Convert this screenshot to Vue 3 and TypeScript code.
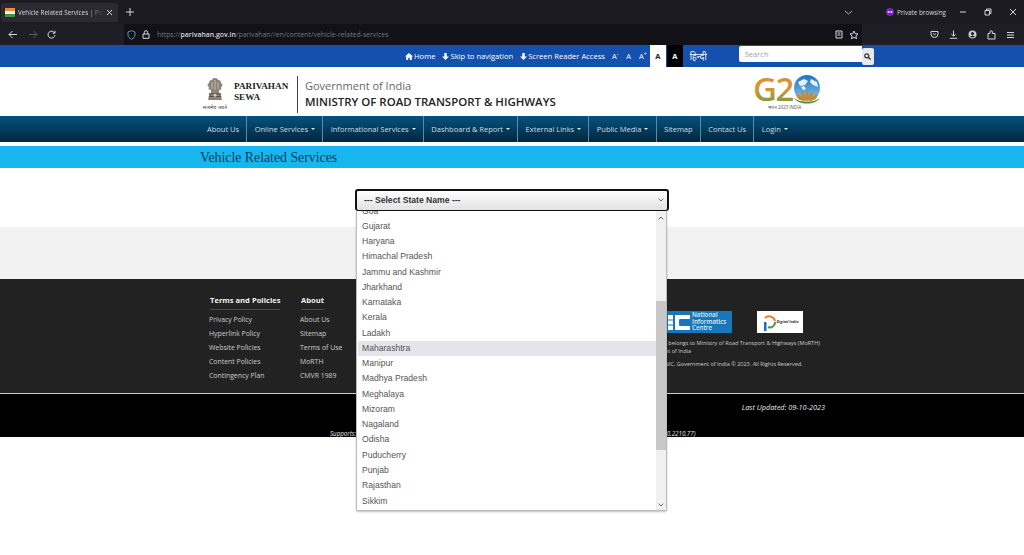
<script setup lang="ts">
// Parivahan "Vehicle Related Services" page inside a private Firefox window.
const topLinks = [
  ["home", "Home"],
  ["down", "Skip to navigation"],
  ["down", "Screen Reader Access"],
];
const navItems = [
  { label: "About Us", caret: false },
  { label: "Online Services", caret: true },
  { label: "Informational Services", caret: true },
  { label: "Dashboard & Report", caret: true },
  { label: "External Links", caret: true },
  { label: "Public Media", caret: true },
  { label: "Sitemap", caret: false },
  { label: "Contact Us", caret: false },
  { label: "Login", caret: true },
];
const policies = ["Privacy Policy", "Hyperlink Policy", "Website Policies", "Content Policies", "Contingency Plan"];
const about = ["About Us", "Sitemap", "Terms of Use", "MoRTH", "CMVR 1989"];
const states = [
  "Goa", "Gujarat", "Haryana", "Himachal Pradesh", "Jammu and Kashmir", "Jharkhand", "Karnataka",
  "Kerala", "Ladakh", "Maharashtra", "Manipur", "Madhya Pradesh", "Meghalaya", "Mizoram",
  "Nagaland", "Odisha", "Puducherry", "Punjab", "Rajasthan", "Sikkim",
];
</script>

<template>
  <div class="page">
    <div class="tabs">
      <div class="tab">
        <svg class="flag" width="10" height="9" viewBox="0 0 10 9">
          <rect width="10" height="3" fill="#f08a2c" />
          <rect y="3" width="10" height="3" fill="#f4f0e6" />
          <rect y="6" width="10" height="3" fill="#3f9440" />
        </svg>
        <span class="tab-title">Vehicle Related Services | Parivahan Sewa</span>
        <svg width="7" height="7" viewBox="0 0 7 7" class="ico"><path d="M1 1l5 5M6 1L1 6" /></svg>
      </div>
      <svg class="plus ico" width="8" height="8" viewBox="0 0 8 8"><path d="M4 0v8M0 4h8" /></svg>
      <svg class="tabs-chevron ico" width="9" height="5" viewBox="0 0 9 5"><path d="M1 1l3.500 3L8 1" /></svg>
      <div class="private">
        <svg width="8" height="8" viewBox="0 0 8 8">
          <circle cx="4" cy="4" r="4" fill="#7b1fc4" />
          <circle cx="2.600" cy="4" r="1.100" fill="#e8d8f5" />
          <circle cx="5.400" cy="4" r="1.100" fill="#e8d8f5" />
        </svg>
        <span>Private browsing</span>
      </div>
      <div class="win-btns">
        <svg class="ico" width="8" height="8" viewBox="0 0 8 8"><path d="M1 4h6" /></svg>
        <svg class="ico" width="8" height="8" viewBox="0 0 8 8"><path d="M1 2.500h4.500V7H1zM2.500 2.500V1H7v4.500H5.500" /></svg>
        <svg class="ico" width="8" height="8" viewBox="0 0 8 8"><path d="M1 1l6 6M7 1L1 7" /></svg>
      </div>
    </div>

    <div class="toolbar">
      <div class="nav-btns">
        <svg class="ico" width="10" height="9" viewBox="0 0 10 9"><path d="M9 4.500H1M4.500 1L1 4.500 4.500 8" /></svg>
        <svg class="ico dim" width="10" height="9" viewBox="0 0 10 9"><path d="M1 4.500h8M5.500 1L9 4.500 5.500 8" /></svg>
        <svg class="ico" width="9" height="9" viewBox="0 0 9 9"><path d="M7.600 3A3.500 3.500 0 1 0 8 5M8 .8V3.200H5.600" /></svg>
      </div>
      <div class="urlbar">
        <svg class="ico shield" width="9" height="10" viewBox="0 0 9 10"><path d="M4.500 .7L8 2v3c0 2-1.500 3.400-3.500 4.300C2.500 8.400 1 7 1 5V2z" /></svg>
        <svg class="ico" width="8" height="9" viewBox="0 0 8 9"><path d="M1 4h6v4.300H1zM2.300 4V2.400a1.700 1.700 0 0 1 3.400 0V4" /></svg>
        <span class="url">https://<b>parivahan.gov.in</b>/parivahan//en/content/vehicle-related-services</span>
        <svg class="ico reader" width="8" height="9" viewBox="0 0 8 9"><path d="M1 1h6v7H1zM2.500 3h3M2.500 5h3" /></svg>
        <svg class="ico" width="10" height="10" viewBox="0 0 10 10"><path d="M5 1l1.200 2.700 2.800.3-2.100 1.900.6 2.800L5 7.300 2.500 8.700l.6-2.800L1 4l2.800-.3z" /></svg>
      </div>
      <div class="tool-btns">
        <svg class="ico" width="9" height="9" viewBox="0 0 9 9"><path d="M1 1.500h7V4a3.500 3.500 0 0 1-7 0zM3 3.500l1.500 1.300L6 3.500" /></svg>
        <svg class="ico" width="9" height="9" viewBox="0 0 9 9"><path d="M4.500 .5v5.500M2.300 4l2.200 2.200L6.700 4M.8 8.300h7.400" /></svg>
        <svg width="9" height="9" viewBox="0 0 9 9"><circle cx="4.500" cy="4.500" r="4" fill="#c9c9cf" /><circle cx="4.500" cy="3.500" r="1.500" fill="#1c1b22" /><path d="M2 7.300a2.700 2.700 0 0 1 5 0z" fill="#1c1b22" /></svg>
        <svg class="ico" width="9" height="10" viewBox="0 0 9 10"><path d="M1 3.500h2V2a1.200 1.200 0 0 1 2.400 0v1.500H8V9H1z" /></svg>
        <svg class="ico" width="9" height="8" viewBox="0 0 9 8"><path d="M1 1.500h7M1 4h7M1 6.500h7" /></svg>
      </div>
    </div>

    <div class="topbar">
      <div class="wrap topbar-inner">
        <a v-for="[icon, text] in topLinks" :key="text" class="top-link">
          <svg v-if="icon === 'home'" width="8" height="7" viewBox="0 0 8 7"><path d="M4 0L0 3.500h1.200V7h2V4.800h1.600V7h2V3.500H8z" fill="#fff" /></svg>
          <svg v-else width="7" height="7" viewBox="0 0 7 7"><path d="M2.300 0h2.400v3.500H7L3.500 7 0 3.500h2.300z" fill="#fff" /></svg>
          {{ text }}
        </a>
        <span class="size first">A<sup>-</sup></span>
        <span class="size">A</span>
        <span class="size">A<sup>+</sup></span>
        <span class="contrast light">A</span>
        <span class="contrast dark">A</span>
        <span class="hindi">हिन्दी</span>
        <div class="search">
          <span class="search-box">Search</span>
          <span class="search-btn">
            <svg width="7" height="7" viewBox="0 0 7 7"><circle cx="2.800" cy="2.800" r="2" fill="none" stroke="#333" stroke-width="1.200" /><path d="M4.300 4.300L6.500 6.500" stroke="#333" stroke-width="1.400" /></svg>
          </span>
        </div>
      </div>
    </div>

    <header class="wrap masthead">
      <div class="emblem">
        <svg width="18" height="26" viewBox="0 0 18 26">
          <path d="M9 0c2 0 3 1 3 2 2 0 3 1 3 3 2 1 2 3 0 4 1 1 0 3-2 3v3h2v2l1 5H2l1-5v-2h2v-3c-2 0-3-2-2-3-2-1-2-3 0-4 0-2 1-3 3-3 0-1 1-2 3-2z" fill="#8a8378" />
          <path d="M6 4v7M9 2v10M12 4v7" stroke="#d8d4cc" stroke-width=".7" />
          <path d="M3 16h12M3 18.500h12" stroke="#4e4a44" stroke-width=".9" />
          <circle cx="9" cy="17.200" r="1.500" fill="#d8d4cc" />
        </svg>
        <span class="motto">सत्यमेव जयते</span>
      </div>
      <div class="brand">PARIVAHAN<br />SEWA</div>
      <div class="ministry">
        <div class="gov">Government of India</div>
        <div class="morth">MINISTRY OF ROAD TRANSPORT &amp; HIGHWAYS</div>
      </div>
      <svg class="g20" width="72" height="40" viewBox="0 0 72 40">
        <defs>
          <linearGradient id="g-fill" x1="0" y1="0" x2="0" y2="1">
            <stop offset="0" stop-color="#e98a2d" />
            <stop offset=".55" stop-color="#c99a3a" />
            <stop offset="1" stop-color="#4d9a3f" />
          </linearGradient>
          <linearGradient id="globe" x1="0" y1="0" x2="0" y2="1">
            <stop offset="0" stop-color="#1a76bf" />
            <stop offset="1" stop-color="#8cc4e6" />
          </linearGradient>
        </defs>
        <text x="0" y="26" class="g20-text" fill="url(#g-fill)">G2</text>
        <circle cx="54" cy="13" r="13" fill="url(#globe)" />
        <path d="M45 7l6-3 4 2-3 4-5 1zM58 4l6 3 1 5-5-2-3-3zM48 12l3-1 2 3-3 1z" fill="#e7f2f8" />
        <path d="M54 15c2 3 2 7 0 11-2-4-2-8 0-11zM48 16c3 2 5 5 5.500 10-3.500-2-5.500-5-5.500-10zM60 16c-3 2-5 5-5.500 10 3.500-2 5.500-5 5.500-10zM43 19c4 1 7 3 9 7-5 0-8-2-9-7zM65 19c-4 1-7 3-9 7 5 0 8-2 9-7z" fill="#c98a2e" />
        <path d="M41 23c4 3 8 3.500 13 3.500s9-.5 13-3.500c-3 4-7 5.500-13 5.500s-10-1.500-13-5.500z" fill="#4d8f3a" />
        <text x="15" y="34" class="g20-small" fill="#555">भारत 2023 INDIA</text>
      </svg>
    </header>

    <nav class="navbar">
      <div class="wrap nav-inner">
        <a v-for="item in navItems" :key="item.label" class="nav-item">
          {{ item.label }}<i v-if="item.caret" class="caret"></i>
        </a>
      </div>
    </nav>

    <div class="title-band">
      <h1 class="wrap page-title">Vehicle Related Services</h1>
    </div>

    <div class="select-area">
      <div class="select-wrap">
        <div class="select">
          <span>--- Select State Name ---</span>
          <svg class="select-arrow" width="6" height="4" viewBox="0 0 6 4"><path d="M.7.7L3 3 5.300.7" fill="none" stroke="#666" /></svg>
        </div>
        <div class="dropdown">
          <ul class="options">
            <li v-for="s in states" :key="s" :class="{ hover: s === 'Maharashtra' }">{{ s }}</li>
          </ul>
          <div class="scrollbar">
            <svg class="sb-up" width="6" height="4" viewBox="0 0 6 4"><path d="M.7 3.300L3 1l2.300 2.300" fill="none" stroke="#666" /></svg>
            <div class="sb-thumb"></div>
            <svg class="sb-down" width="6" height="4" viewBox="0 0 6 4"><path d="M.7.7L3 3 5.300.7" fill="none" stroke="#666" /></svg>
          </div>
        </div>
      </div>
    </div>

    <div class="grey-band"></div>

    <footer class="footer">
      <div class="wrap foot-inner">
        <div class="foot-col policies">
          <h4>Terms and Policies</h4>
          <a v-for="p in policies" :key="p">{{ p }}</a>
        </div>
        <div class="foot-col">
          <h4>About</h4>
          <a v-for="a in about" :key="a">{{ a }}</a>
        </div>
        <div class="foot-right">
          <div class="logos">
            <div class="nic">
              <svg width="22" height="15" viewBox="0 0 22 15"><path d="M0 0h5v15H0zM7 0h15v4H12c-1 0-1 1-1 3.500S11 11 12 11h10v4H7z" fill="#fff" /><path d="M0 5h5M0 10h5" stroke="#1877bb" /></svg>
              <span>National<br />Informatics<br />Centre</span>
            </div>
            <div class="digital">
              <svg width="14" height="17" viewBox="0 0 14 17">
                <path d="M3 4a6 6 0 0 1 10 3" fill="none" stroke="#e8792b" stroke-width="2" />
                <path d="M13 8a5 5 0 0 1-7 5" fill="none" stroke="#4d9a3f" stroke-width="2" />
                <path d="M2 8h2.500v9H2z" fill="#1d6fb8" />
              </svg>
              <span class="di-text">Digital India</span>
            </div>
          </div>
          <p class="rights-a">This site belongs to Ministry of Road Transport &amp; Highways (MoRTH)</p>
          <p class="rights-b">Government of India</p>
          <p class="rights-c">By NIC, Government of India © 2023. All Rights Reserved.</p>
        </div>
      </div>
    </footer>

    <div class="blackbar">
      <div class="updated">Last Updated: 09-10-2023</div>
      <div class="supports">Supports: Mozilla Firefox 106.0, Google Chrome 106.0, Microsoft Edge 106.0, Apple Safari 16.1, Brave 1.45, Opera 92.0 (106.0.2210.77)</div>
    </div>
  </div>
</template>

<style>
html,
body {
  margin: 0;
  background: #fff;
}
</style>

<style scoped>
.page {
  position: relative;
  width: 1024px;
  height: 555px;
  overflow: hidden;
  font-family: "Open Sans", "Noto Sans", sans-serif;
  background: #fff;
}
.wrap {
  width: 630px;
  margin: 0 auto;
  box-sizing: border-box;
}
.ico {
  fill: none;
  stroke: #d6d6da;
  stroke-width: 1;
  flex: none;
}
.ico.dim {
  stroke: #5c5b63;
}

/* browser chrome */
.tabs {
  height: 24px;
  display: flex;
  align-items: center;
  background: #1c1b22;
  color: #d6d6da;
  font-size: 6.300px;
}
.tab {
  width: 117px;
  height: 19px;
  margin-left: 1px;
  padding: 0 5px 0 4px;
  box-sizing: border-box;
  display: flex;
  align-items: center;
  gap: 3px;
  background: #2b2a33;
  border-radius: 3px;
}
.flag {
  flex: none;
}
.tab-title {
  flex: 1;
  overflow: hidden;
  white-space: nowrap;
  -webkit-mask-image: linear-gradient(to right, #000 82%, transparent);
  mask-image: linear-gradient(to right, #000 82%, transparent);
}
.plus {
  margin-left: 8px;
}
.tabs-chevron {
  margin-left: 710px;
  stroke: #aaa;
}
.private {
  flex: none;
  display: flex;
  align-items: center;
  gap: 3px;
  margin-left: 33px;
  white-space: nowrap;
}
.win-btns {
  flex: none;
  display: flex;
  gap: 17px;
  margin-left: 13px;
}
.toolbar {
  height: 21px;
  display: flex;
  align-items: center;
  background: #1f1e26;
}
.nav-btns {
  width: 124px;
  display: flex;
  align-items: center;
  gap: 9.500px;
  padding-left: 8px;
  box-sizing: border-box;
}
.urlbar {
  width: 738px;
  height: 21px;
  display: flex;
  align-items: center;
  gap: 6px;
  padding: 0 3px;
  box-sizing: border-box;
  background: #121117;
}
.shield {
  stroke: #4d9bb8;
}
.url {
  flex: 1;
  margin-left: 1px;
  font-size: 6.900px;
  color: #77767e;
  white-space: nowrap;
}
.url b {
  color: #d8d8dc;
  font-weight: 600;
}
.tool-btns {
  display: flex;
  align-items: center;
  gap: 10px;
  margin-left: 68px;
}

/* top strip */
.topbar {
  height: 22px;
  background: #1450ae;
}
.topbar-inner {
  height: 22px;
  padding-left: 208px;
  display: flex;
  align-items: center;
  color: #fff;
  font-size: 7.600px;
}
.top-link {
  flex: none;
  display: flex;
  align-items: center;
  gap: 1px;
  margin-right: 7px;
  white-space: nowrap;
}
.size {
  flex: none;
  margin-left: 7px;
  margin-right: 1px;
  font-size: 7.500px;
}
.size.first {
  margin-left: 0;
}
.size sup {
  font-size: 5px;
  line-height: 0;
}
.contrast {
  flex: none;
  width: 16px;
  height: 22px;
  display: flex;
  align-items: center;
  justify-content: center;
  font-weight: 700;
  font-size: 7.500px;
}
.contrast.light {
  margin-left: 2px;
  background: #fff;
  color: #222;
}
.contrast.dark {
  margin-left: 1px;
  background: #000;
}
.hindi {
  flex: none;
  margin-left: 7px;
  font-size: 9px;
}
.search {
  flex: none;
  align-self: flex-start;
  display: flex;
  margin-left: 32px;
}
.search-box {
  width: 123px;
  height: 16px;
  margin-top: 1px;
  padding-left: 6px;
  box-sizing: border-box;
  background: #fff;
  border-radius: 2px 0 0 2px;
  color: #a0a0a0;
  font-size: 7.500px;
  line-height: 16px;
}
.search-btn {
  width: 12px;
  height: 17px;
  margin-top: 3px;
  display: flex;
  align-items: center;
  justify-content: center;
  background: #e8e8e8;
  border-radius: 2px;
}

/* masthead */
.masthead {
  height: 49px;
  display: flex;
  align-items: center;
  padding-left: 5px;
}
.emblem {
  width: 26px;
  flex: none;
  display: flex;
  flex-direction: column;
  align-items: center;
  margin-top: 5px;
}
.motto {
  font-size: 5px;
  color: #444;
  line-height: 6px;
  white-space: nowrap;
}
.brand {
  margin-left: 6px;
  width: 63px;
  flex: none;
  font-family: "Liberation Serif", serif;
  font-weight: 700;
  font-size: 9.200px;
  line-height: 11px;
  color: #222;
}
.ministry {
  height: 37px;
  margin-top: 6px;
  padding-left: 7px;
  border-left: 1px solid #444;
  display: flex;
  flex-direction: column;
  justify-content: center;
  padding-bottom: 2px;
  box-sizing: border-box;
}
.gov {
  font-size: 11px;
  line-height: 16px;
  color: #666;
}
.morth {
  font-size: 11.450px;
  line-height: 16px;
  font-weight: 600;
  color: #222;
  white-space: nowrap;
}
.g20 {
  margin-left: auto;
  margin-right: 2px;
  margin-top: 7px;
  flex: none;
}
.g20-text {
  font-family: "Open Sans", sans-serif;
  font-size: 33px;
  font-weight: 600;
  letter-spacing: -1.500px;
}
.g20-small {
  font-size: 4.500px;
}

/* nav */
.navbar {
  height: 26px;
  background: linear-gradient(#05527f, #02263f);
}
.nav-inner {
  height: 26px;
  display: flex;
  padding-left: 2.700px;
}
.nav-item {
  display: flex;
  align-items: center;
  padding: 0 7.300px;
  color: #cfdbe3;
  font-size: 7.500px;
  white-space: nowrap;
  border-right: 1px solid #5d8aa3;
}
.nav-item:last-child {
  border-right: 0;
}
.caret {
  width: 0;
  height: 0;
  margin-left: 3px;
  border-left: 2px solid transparent;
  border-right: 2px solid transparent;
  border-top: 2px solid #e6eef2;
}
.title-band {
  height: 22px;
  margin-top: 4px;
  background: #17b6ee;
}
.page-title {
  margin-top: 0;
  margin-bottom: 0;
  padding-left: 3px;
  font-family: "Liberation Serif", serif;
  font-weight: 400;
  font-size: 13.800px;
  line-height: 23px;
  color: #0f3f5c;
}

/* state select */
.select-area {
  height: 59px;
  padding-top: 21px;
  box-sizing: border-box;
}
.select-wrap {
  position: relative;
  width: 314px;
  margin: 0 auto;
}
.select {
  height: 22px;
  padding: 0 7px 1px;
  box-sizing: border-box;
  display: flex;
  align-items: center;
  justify-content: space-between;
  border: 2px solid #111;
  border-bottom-width: 1px;
  border-radius: 3px;
  background: linear-gradient(#fff, #e2e2e2);
  font-family: "Liberation Sans", Arial, sans-serif;
  font-weight: 700;
  font-size: 8.600px;
  color: #333;
}
.select-arrow {
  margin-right: -4px;
}
.dropdown {
  position: absolute;
  z-index: 3;
  top: 22px;
  left: 1px;
  width: 311px;
  height: 300px;
  box-sizing: border-box;
  display: flex;
  overflow: hidden;
  background: #fff;
  border: 1px solid #bbb;
  border-top: 0;
  border-radius: 0 0 2px 2px;
  box-shadow: 0 1px 2px rgba(0, 0, 0, 0.25);
}
.options {
  flex: 1;
  margin: -7.500px 0 0;
  padding: 0 0 0 1px;
  list-style: none;
  font-family: "Liberation Sans", Arial, sans-serif;
  font-size: 8.600px;
  color: #555;
}
.options li {
  height: 15.280px;
  line-height: 15.280px;
  padding-left: 4px;
}
.options li.hover {
  background: #e4e4ea;
}
.scrollbar {
  position: relative;
  width: 10px;
  background: #f0f0f0;
}
.sb-up,
.sb-down {
  position: absolute;
  left: 2px;
}
.sb-up {
  top: 5px;
}
.sb-down {
  bottom: 3px;
}
.sb-thumb {
  position: absolute;
  top: 90px;
  left: 0;
  width: 100%;
  height: 149px;
  background: #c8c8c8;
}
.grey-band {
  height: 52px;
  background: #f2f2f2;
}

/* footer */
.footer {
  height: 114px;
  background: #222;
  color: #ccc;
}
.foot-inner {
  height: 114px;
  display: flex;
  padding: 16px 0 0 12px;
}
.foot-col {
  width: 91px;
  flex: none;
  font-size: 6.900px;
}
.foot-col h4 {
  margin: 0 0 3px 1px;
  width: fit-content;
  padding-bottom: 4px;
  font-size: 7.600px;
  line-height: 10px;
  font-weight: 700;
  color: #f0f0f0;
  border-bottom: 1px solid #484848;
}
.foot-col a {
  display: block;
  height: 13.900px;
  line-height: 13.900px;
  white-space: nowrap;
}
.foot-right {
  flex: none;
  margin-left: 258px;
  width: 200px;
  margin-top: 16px;
  font-size: 5.500px;
  line-height: 8px;
  white-space: nowrap;
}
.logos {
  display: flex;
  gap: 25px;
  margin-left: 17px;
  margin-bottom: 6px;
}
.nic {
  width: 66px;
  height: 22px;
  padding-left: 2px;
  box-sizing: border-box;
  display: flex;
  align-items: center;
  gap: 2px;
  background: #1877bb;
  color: #dcecf7;
  font-size: 6.200px;
  font-weight: 600;
  line-height: 6.500px;
}
.digital {
  width: 46px;
  height: 22px;
  display: flex;
  align-items: center;
  justify-content: center;
  gap: 1px;
  background: #fff;
}
.di-text {
  font-size: 3.800px;
  font-style: italic;
  font-weight: 700;
  color: #333;
  white-space: nowrap;
}
.foot-right p {
  margin: 0;
}
.foot-right .rights-a {
  margin-left: -3px;
}
.foot-right .rights-b {
  margin-left: -11px;
}
.foot-right .rights-c {
  margin-top: 5px;
  padding-left: 8px;
}
.blackbar {
  position: relative;
  height: 44px;
  border-top: 1px solid #ccc;
  box-sizing: border-box;
  background: #000;
  color: #e8e8e8;
  font-style: italic;
}
.updated {
  padding: 8px 199px 0 0;
  text-align: right;
  font-size: 7.300px;
  line-height: 10px;
}
.supports {
  margin-top: 18px;
  padding-left: 330px;
  font-size: 6.200px;
  line-height: 8px;
  white-space: nowrap;
}
</style>
